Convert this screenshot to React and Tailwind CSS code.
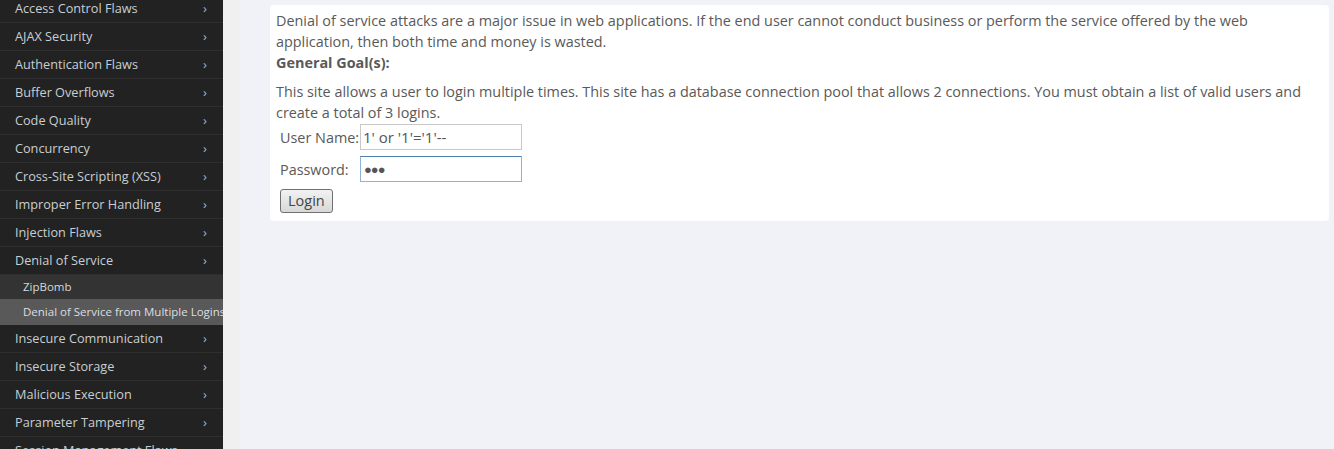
import React from 'react'

const lessons = [
  "Access Control Flaws",
  "AJAX Security",
  "Authentication Flaws",
  "Buffer Overflows",
  "Code Quality",
  "Concurrency",
  "Cross-Site Scripting (XSS)",
  "Improper Error Handling",
  "Injection Flaws",
  "Denial of Service",
];

const after = [
  "Insecure Communication",
  "Insecure Storage",
  "Malicious Execution",
  "Parameter Tampering",
  "Session Management Flaws",
];

const MenuRow = ({ label }) => (
  <div className="flex items-center justify-between h-[28px] pl-[15px] pr-[16px] border-b border-[#2e2e2e] text-[12.7px] text-[#c9ced3]">
    <span className="whitespace-nowrap">{label}</span>
    <span className="text-[13px] text-[#aab4bd]">›</span>
  </div>
);

const App = () => {
  return (
    <div
      className="flex h-[449px] w-[1334px] overflow-hidden bg-[#f1f2f7]"
      style={{ fontFamily: '"Open Sans", "Liberation Sans", sans-serif' }}
    >
      {/* SIDEBAR */}
      <div className="w-[223px] shrink-0 bg-[#222222] overflow-hidden">
        <div className="-mt-[5px]">
          {lessons.map((l) => (
            <MenuRow key={l} label={l} />
          ))}
          <div className="h-[24px] flex items-center pl-[23px] bg-[#333333] text-[11.5px] text-[#d5d8db]">
            ZipBomb
          </div>
          <div className="h-[26px] flex items-center pl-[23px] bg-[#595959] text-[11.5px] text-[#dcdfe2] whitespace-nowrap">
            Denial of Service from Multiple Logins
          </div>
          {after.map((l) => (
            <MenuRow key={l} label={l} />
          ))}
        </div>
      </div>

      {/* STRIP */}
      <div className="w-[17px] shrink-0 bg-[#f0f0f0]" />

      {/* MAIN */}
      <div className="flex-1 pl-[30px] pr-[5px] pt-[5px]">
        <div className="bg-white rounded-[4px] px-[6px] pt-[5px] pb-[8px] text-[14.4px] leading-[21px] text-[#595959]">
          <p>
            Denial of service attacks are a major issue in web applications. If the end user cannot conduct business or perform the service offered by the web application, then both time and money is wasted.
          </p>
          <p className="font-bold">General Goal(s):</p>
          <p className="mt-[8px]">
            This site allows a user to login multiple times. This site has a database connection pool that allows 2 connections. You must obtain a list of valid users and create a total of 3 logins.
          </p>

          <div className="pl-[4px] pt-[1px]">
            <div className="flex items-center">
              <span className="w-[80px]">User Name:</span>
              <input
                readOnly
                value="1' or '1'='1'--"
                className="w-[162px] h-[26px] border border-[#c8c8c8] px-[2px] text-[15px] text-[#555] outline-none"
              />
            </div>
            <div className="flex items-center mt-[6px]">
              <span className="w-[80px]">Password:</span>
              <input
                readOnly
                value="●●●"
                className="w-[162px] h-[26px] border border-[#8fb3d6] border-t-[#4f7fae] px-[3px] text-[13px] tracking-[-1px] text-[#555] outline-none"
              />
            </div>
            <div className="mt-[7px]">
              <button className="h-[24px] px-[7px] border border-[#707070] rounded-[3px] bg-gradient-to-b from-[#f2f2f2] to-[#d8d8d8] text-[14.5px] text-[#444] leading-none">
                Login
              </button>
            </div>
          </div>
        </div>
      </div>
    </div>
  );
};

export default App;
